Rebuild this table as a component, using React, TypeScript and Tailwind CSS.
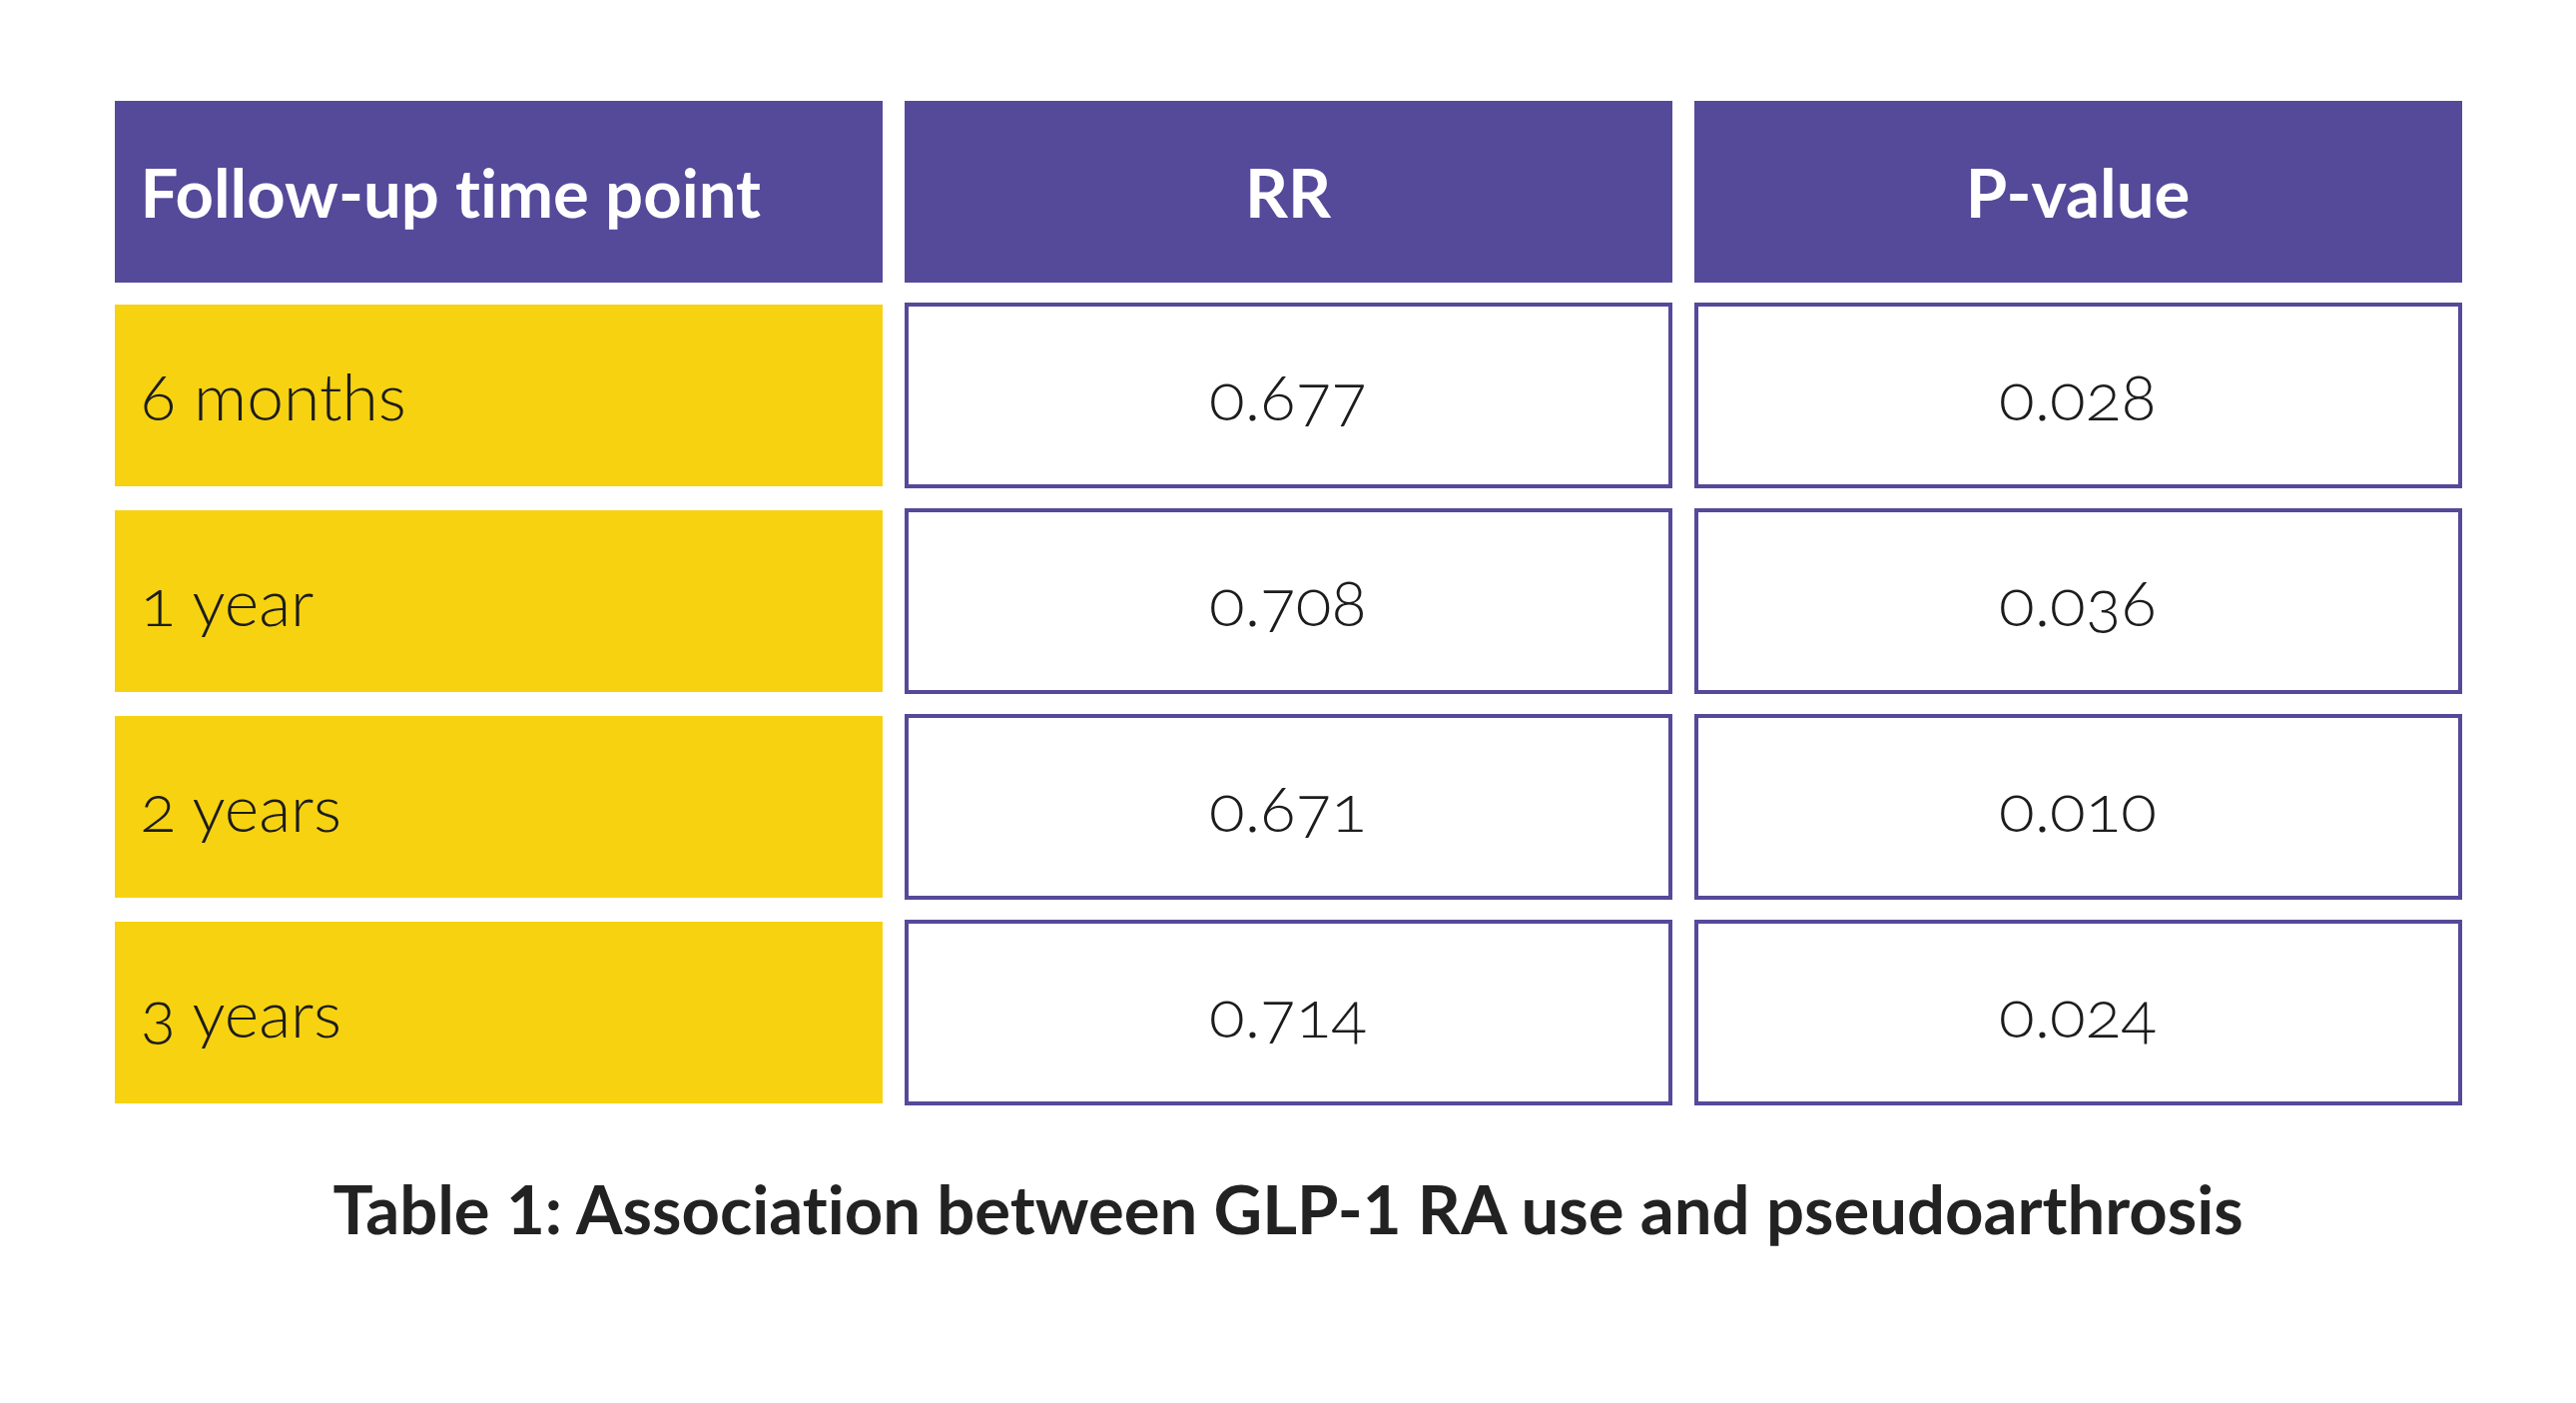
import React from "react";

const rows = [
  { label: "6 months", rr: "0.677", p: "0.028" },
  { label: "1 year", rr: "0.708", p: "0.036" },
  { label: "2 years", rr: "0.671", p: "0.010" },
  { label: "3 years", rr: "0.714", p: "0.024" },
];

export default function App() {
  return (
    <div
      className="w-[2580px] h-[1405px] bg-white flex flex-col items-center [font-variant-ligatures:none]"
      style={{ fontFamily: "Lato, 'Open Sans', sans-serif" }}
    >
      <div className="mt-[101px] grid grid-cols-[769px_769px_769px] gap-x-[22px] gap-y-[20px]">
        <div className="h-[182px] bg-[#55499a] flex items-center pl-[26px] text-white font-bold text-[67px] leading-none">
          Follow-up time point
        </div>
        <div className="h-[182px] bg-[#55499a] flex items-center justify-center text-white font-bold text-[67px] leading-none">
          RR
        </div>
        <div className="h-[182px] bg-[#55499a] flex items-center justify-center text-white font-bold text-[67px] leading-none">
          P-value
        </div>
        {rows.map((r) => (
          <React.Fragment key={r.label}>
            <div className="h-[186px] py-[2px]">
              <div className="h-full bg-[#f7d211] flex items-center pl-[26px] text-[#1c1c1c] font-light text-[66px] leading-none oldstyle-nums">
                {r.label}
              </div>
            </div>
            <div className="h-[186px] border-[4px] border-[#55499a] bg-white flex items-center justify-center text-[#1c1c1c] font-light text-[66px] leading-none oldstyle-nums">
              {r.rr}
            </div>
            <div className="h-[186px] border-[4px] border-[#55499a] bg-white flex items-center justify-center text-[#1c1c1c] font-light text-[66px] leading-none oldstyle-nums">
              {r.p}
            </div>
          </React.Fragment>
        ))}
      </div>
      <div className="mt-[70px] text-[67px] font-bold text-[#222222] leading-none">
        Table 1: Association between GLP-1 RA use and pseudoarthrosis
      </div>
    </div>
  );
}
